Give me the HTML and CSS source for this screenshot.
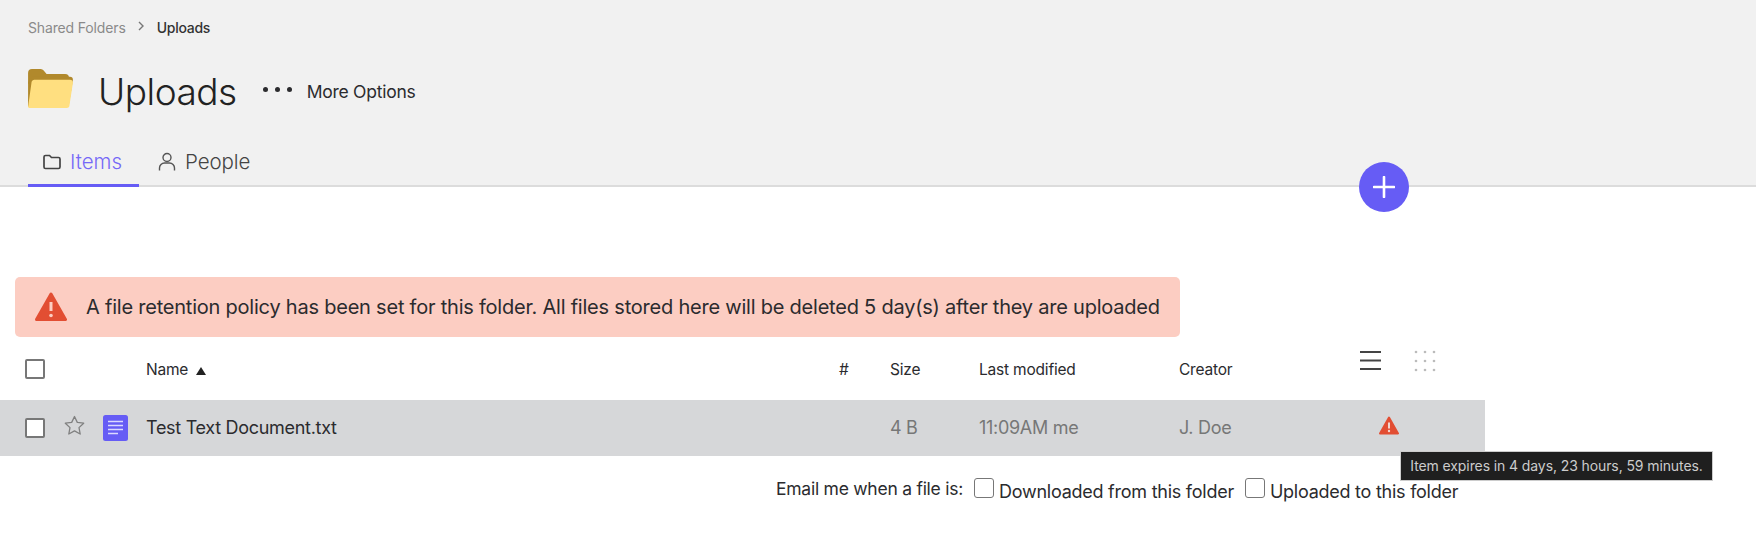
FILE: index.html
```html
<!DOCTYPE html>
<html lang="en">
<head>
    <meta charset="UTF-8">
    <title>Uploads</title>
    <link rel="stylesheet" href="styles.css">
</head>
<body>
    <div class="top">
        <div class="crumbs">
            <span class="crumb-link">Shared Folders</span>
            <svg class="crumb-sep" width="8" height="10" viewBox="0 0 8 10"><path d="M2 1l4 4-4 4" fill="none" stroke="#777" stroke-width="1.4"/></svg>
            <span class="crumb-now">Uploads</span>
        </div>
        <div class="head">
            <svg class="big-folder" width="45" height="39" viewBox="0 0 46 40">
                <path d="M0 4a4 4 0 0 1 4-4h9a4 4 0 0 1 3 1.500l3 3.500h19a4 4 0 0 1 4 4v6H0z" fill="#b1892c"/>
                <path d="M0 36V14l2-4a3 3 0 0 1 3-2h38a3 3 0 0 1 3 3l-4 25a3 3 0 0 1-3 3H2a2 2 0 0 1-2-3z" fill="#b1892c"/>
                <path d="M7 11h36a3 3 0 0 1 3 3l-3.500 23a3 3 0 0 1-3 3H2a2 2 0 0 1-2-1l3.500-25a3 3 0 0 1 3.500-3z" fill="#ffdf80"/>
            </svg>
            <h1 class="title">Uploads</h1>
            <div class="dots"><i></i><i></i><i></i></div>
            <span class="more">More Options</span>
        </div>
        <div class="tabs">
            <div class="tab tab-on">
                <svg width="18" height="16" viewBox="0 0 18 16"><path d="M1 3a1.500 1.500 0 0 1 1.500-1.500h4l2 2h7A1.500 1.500 0 0 1 17 5v8a1.500 1.500 0 0 1-1.500 1.500h-13A1.500 1.500 0 0 1 1 13z" fill="none" stroke="#444" stroke-width="1.700"/></svg>
                <span>Items</span>
            </div>
            <div class="tab">
                <svg width="18" height="19" viewBox="0 0 18 19"><circle cx="9" cy="5.500" r="4" fill="none" stroke="#555" stroke-width="1.400"/><path d="M1.500 18.500v-2.500a5 5 0 0 1 5-5h5a5 5 0 0 1 5 5v2.500" fill="none" stroke="#555" stroke-width="1.400"/></svg>
                <span>People</span>
            </div>
        </div>
    </div>

    <div class="fab">
        <svg width="22" height="22" viewBox="0 0 22 22"><path d="M11 1v20M1 11h20" stroke="#fff" stroke-width="2.600" stroke-linecap="round"/></svg>
    </div>

    <div class="alert">
        <svg width="32" height="30" viewBox="0 0 32 30">
            <path d="M16 2L30.500 27.500H1.500z" fill="#e24e33" stroke="#e24e33" stroke-width="3" stroke-linejoin="round"/>
            <path d="M16 10v9" stroke="#fccdc2" stroke-width="3"/>
            <circle cx="16" cy="23.500" r="1.800" fill="#fccdc2"/>
        </svg>
        <span>A file retention policy has been set for this folder. All files stored here will be deleted 5 day(s) after they are uploaded</span>
    </div>

    <div class="grid grid-head">
        <span class="box"></span>
        <span></span>
        <span></span>
        <span class="sort">Name <svg width="10" height="8" viewBox="0 0 10 8"><path d="M5 0l5 8H0z" fill="#222"/></svg></span>
        <span>#</span>
        <span>Size</span>
        <span>Last modified</span>
        <span>Creator</span>
        <span class="views">
            <svg width="21" height="21" viewBox="0 0 21 21"><path d="M0 2h21M0 10.500h21M0 19h21" stroke="#444" stroke-width="2"/></svg>
            <svg width="22" height="22" viewBox="0 0 22 22" fill="#bbb"><circle cx="2" cy="2" r="1.300"/><circle cx="11" cy="2" r="1.300"/><circle cx="20" cy="2" r="1.300"/><circle cx="2" cy="11" r="1.300"/><circle cx="11" cy="11" r="1.300"/><circle cx="20" cy="11" r="1.300"/><circle cx="2" cy="20" r="1.300"/><circle cx="11" cy="20" r="1.300"/><circle cx="20" cy="20" r="1.300"/></svg>
        </span>
    </div>

    <div class="grid grid-row">
        <span class="box"></span>
        <svg class="star" width="21" height="20" viewBox="0 0 21 20"><path d="M10.500 1.500l2.800 5.900 6.400.8-4.700 4.400 1.200 6.400-5.700-3.100-5.700 3.100 1.200-6.400L1.300 8.200l6.400-.8z" fill="none" stroke="#808080" stroke-width="1.300" stroke-linejoin="round"/></svg>
        <svg class="doc" width="25" height="26" viewBox="0 0 25 26"><rect width="25" height="26" rx="2.500" fill="#665cf5"/><path d="M5 6.500h15M5 10.500h15M5 14.500h15M5 18.500h10" stroke="#dcd9ff" stroke-width="1.700"/></svg>
        <span class="fname">Test Text Document.txt</span>
        <span></span>
        <span class="dim">4 B</span>
        <span class="dim">11:09AM me</span>
        <span class="dim">J. Doe</span>
        <span class="warn">
            <svg width="20" height="19" viewBox="0 0 20 19">
                <path d="M10 1.500L19 17.500H1z" fill="#e24e33" stroke="#e24e33" stroke-width="2" stroke-linejoin="round"/>
                <path d="M10 6.500v6" stroke="#f3d6cf" stroke-width="2"/>
                <circle cx="10" cy="15" r="1.200" fill="#f3d6cf"/>
            </svg>
        </span>
    </div>

    <div class="tip">Item expires in 4 days, 23 hours, 59 minutes.</div>

    <div class="notify">
        <span class="notify-label">Email me when a file is:</span>
        <span class="box box-thin"></span>
        <span class="notify-opt">Downloaded from this folder</span>
        <span class="box box-thin"></span>
        <span class="notify-opt">Uploaded to this folder</span>
    </div>
</body>
</html>
```

FILE: styles.css
```css
*{margin:0;padding:0;box-sizing:border-box;}
body{
    font-family:Inter,"Liberation Sans",sans-serif;
    color:#2b2b2e;
    background:#fff;
    position:relative;
}
.top{
    height:187px;
    background:#f1f1f1;
    border-bottom:2px solid #dcdcdc;
    padding:19px 28px 0;
}
.crumbs{
    display:flex;
    align-items:center;
    height:16px;
    font-size:14px;
    letter-spacing:-.15px;
}
.crumb-link{color:#8a8a8a;}
.crumb-sep{margin:-3px 12px 0 11px;}
.crumb-now{color:#333;font-weight:500;letter-spacing:-.25px;}
.head{
    display:flex;
    align-items:center;
    height:46px;
    margin-top:33px;
}
.big-folder{margin-top:-6px;}
.title{
    font-size:37px;
    font-weight:300;
    color:#222;
    margin-left:25px;
    letter-spacing:-.5px;
}
.dots{
    display:flex;
    gap:7px;
    margin-left:26px;
    margin-top:-4px;
}
.dots i{
    width:5px;
    height:5px;
    border-radius:50%;
    background:#2b2b2e;
}
.more{
    font-size:17.500px;
    margin-left:15px;
    letter-spacing:-.25px;
}
.tabs{
    display:flex;
    margin-top:28px;
}
.tab{
    display:flex;
    align-items:center;
    gap:9px;
    height:45px;
    padding:0 19px 6px;
    font-size:20.500px;
    font-weight:300;
    color:#444;
    letter-spacing:-.1px;
}
.tab-on{
    width:111px;
    padding:0 15px 3px;
    gap:9px;
    color:#7568f7;
    border-bottom:3px solid #665cf5;
    letter-spacing:0;
}
.fab{
    position:absolute;
    left:1359px;
    top:162px;
    width:50px;
    height:50px;
    border-radius:50%;
    background:#665cf5;
    display:flex;
    align-items:center;
    justify-content:center;
}
.alert{
    display:flex;
    align-items:center;
    gap:19px;
    width:1165px;
    height:60px;
    margin:90px 0 0 15px;
    padding:0 0 1px 20px;
    background:#fccdc2;
    border-radius:5px;
    font-size:20px;
    letter-spacing:-.22px;
}
.grid{
    display:grid;
    grid-template-columns:39px 39px 43px 693px 51px 89px 200px 180px 126px;
    align-items:center;
    width:1485px;
    padding-left:25px;
}
.grid-head{
    height:63px;
    font-size:15.500px;
    letter-spacing:-.2px;
}
.grid-head > span{position:relative;top:1px;}
.grid-head > .box{top:0;}
.sort svg{margin-left:4px;}
.views{
    display:flex;
    gap:33px;
    margin:-17px 0 0 1px;
}
.grid-row{
    height:56px;
    background:#d6d7d9;
    font-size:18px;
    padding-bottom:1px;
}
.box{
    display:block;
    width:20px;
    height:20px;
    background:#fff;
    border:2px solid #777;
    border-radius:2px;
}
.star{margin-top:-6px;}
.fname{letter-spacing:-.3px;}
.dim{color:#777;letter-spacing:-.3px;}
.warn{margin:-5px 0 0 20px;display:flex;}
.tip{
    position:absolute;
    left:1400px;
    top:451px;
    width:313px;
    height:30px;
    line-height:28px;
    text-align:center;
    background:#1f1f1f;
    border:1px solid #ccc;
    color:#ccc;
    font-size:14px;
    white-space:nowrap;
    letter-spacing:-.1px;
}
.notify{
    display:flex;
    align-items:center;
    margin:21px 0 0 776px;
    font-size:17.500px;
    letter-spacing:-.25px;
}
.notify-label{margin-top:-2px;}
.box-thin{
    width:20px;
    height:20px;
    border-width:1.500px;
    border-radius:3px;
    margin-top:-4px;
}
.notify-label + .box-thin{margin-left:11px;}
.notify-opt{margin:4px 11px 0 5px;font-size:18px;}
```
